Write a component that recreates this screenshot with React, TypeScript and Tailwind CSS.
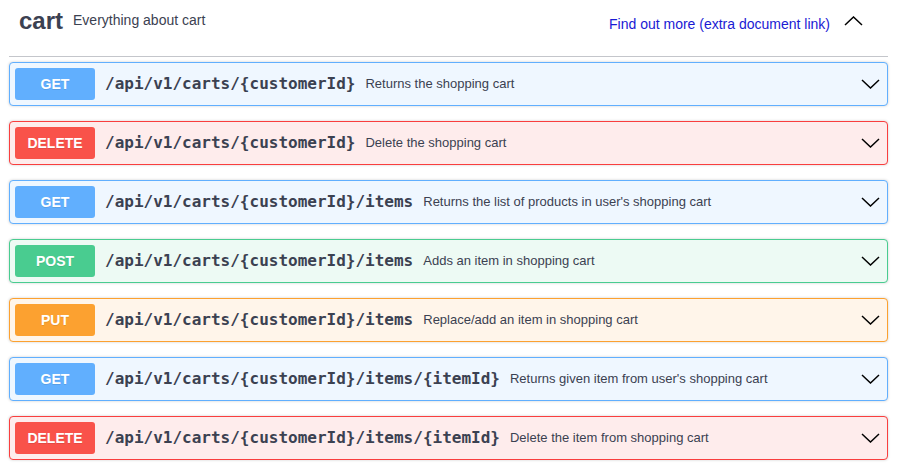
import React from 'react';

type Method = 'GET' | 'POST' | 'PUT' | 'DELETE';

interface Operation {
  method: Method;
  path: string;
  summary: string;
}

const operations: Operation[] = [
  { method: 'GET', path: '/api/v1/carts/{customerId}', summary: 'Returns the shopping cart' },
  { method: 'DELETE', path: '/api/v1/carts/{customerId}', summary: 'Delete the shopping cart' },
  { method: 'GET', path: '/api/v1/carts/{customerId}/items', summary: "Returns the list of products in user's shopping cart" },
  { method: 'POST', path: '/api/v1/carts/{customerId}/items', summary: 'Adds an item in shopping cart' },
  { method: 'PUT', path: '/api/v1/carts/{customerId}/items', summary: 'Replace/add an item in shopping cart' },
  { method: 'GET', path: '/api/v1/carts/{customerId}/items/{itemId}', summary: "Returns given item from user's shopping cart" },
  { method: 'DELETE', path: '/api/v1/carts/{customerId}/items/{itemId}', summary: 'Delete the item from shopping cart' },
];

// Swagger UI method colours
const methodStyles: { [key in Method]: { row: string; badge: string } } = {
  GET: { row: 'border-[#61affe] bg-[#eff7ff]', badge: 'bg-[#61affe]' },
  POST: { row: 'border-[#49cc90] bg-[#edfaf4]', badge: 'bg-[#49cc90]' },
  PUT: { row: 'border-[#fca130] bg-[#fff5ea]', badge: 'bg-[#fca130]' },
  DELETE: { row: 'border-[#f93e3e] bg-[#feecec]', badge: 'bg-[#f9524a]' },
};

const Chevron: React.FC<{ up?: boolean }> = ({ up }) => (
  <svg width="19" height="10" viewBox="0 0 19 10" className="block">
    <polyline
      points={up ? '1,9 9.5,1 18,9' : '1,1 9.5,9 18,1'}
      fill="none"
      stroke="#000"
      strokeWidth="1.5"
    />
  </svg>
);

const OperationRow: React.FC<{ op: Operation }> = ({ op }) => {
  const style = methodStyles[op.method];
  return (
    <div className={`mb-[15px] flex h-[44px] items-center rounded-[4px] border p-[5px] shadow-[0_0_3px_rgba(0,0,0,0.19)] ${style.row}`}>
      <div
        className={`flex h-[32px] w-[80px] shrink-0 items-center justify-center rounded-[3px] text-[14px] font-bold text-white [text-shadow:0_1px_0_rgba(0,0,0,0.1)] ${style.badge}`}
        style={{ fontFamily: '"Liberation Sans", Arial, sans-serif' }}
      >
        {op.method}
      </div>
      <span
        className="px-[10px] text-[16px] font-bold text-[#3b4151]"
        style={{ fontFamily: '"DejaVu Sans Mono", monospace' }}
      >
        {op.path}
      </span>
      <span className="flex-1 text-[13px] text-[#3b4151]">{op.summary}</span>
      <div className="mr-[2px]">
        <Chevron />
      </div>
    </div>
  );
};

export default function App() {
  return (
    <div
      className="min-h-[475px] w-[898px] bg-white pl-[9px] pr-[10px]"
      style={{ fontFamily: '"Liberation Sans", Arial, sans-serif' }}
    >
      {/* Tag header */}
      <div className="mb-[5px] flex h-[57px] items-start border-b border-[#c4c6cb] text-[#3b4151]">
        <span className="ml-[10px] mt-[6px] text-[24px] font-bold leading-[30px]">cart</span>
        <span className="ml-[10px] mt-[12px] flex-1 text-[14px] leading-[17px]">Everything about cart</span>
        <a className="mt-[16px] text-[14px] leading-[17px] text-[#1a1ad4]" href="#">
          Find out more (extra document link)
        </a>
        <div className="ml-[14px] mr-[25px] mt-[16px]">
          <Chevron up />
        </div>
      </div>

      {operations.map((op, i) => (
        <OperationRow key={i} op={op} />
      ))}
    </div>
  );
}
